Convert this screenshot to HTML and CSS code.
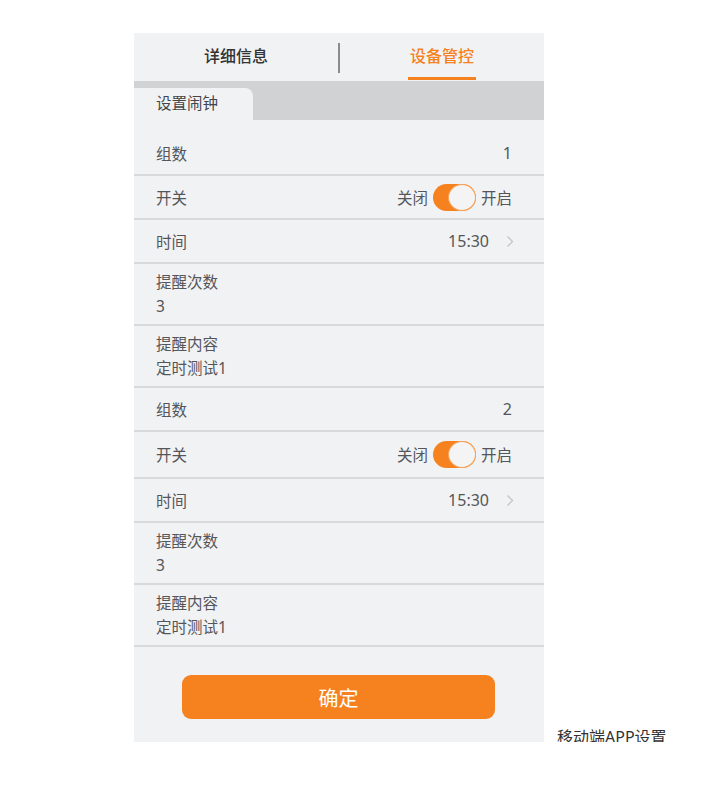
FILE: index.html
```html
<!DOCTYPE html>
<html lang="zh-CN">
<head>
<meta charset="utf-8">
<title>移动端APP设置</title>
<link rel="stylesheet" href="styles.css">
</head>
<body>
<div class="page">
  <div class="panel">
    <div class="tabs">
      <div class="tab">详细信息</div>
      <div class="tab-divider"></div>
      <div class="tab active"><span class="tab-label">设备管控</span></div>
    </div>
    <div class="subbar">
      <div class="subtab">设置闹钟</div>
    </div>
    <div class="list">
      <div class="row"><span class="label">组数</span><span class="value">1</span></div>
      <div class="row"><span class="label">开关</span>
        <span class="switch-wrap"><span>关闭</span><span class="switch"><span class="knob"></span></span><span>开启</span></span>
      </div>
      <div class="row"><span class="label">时间</span>
        <span class="value time">15:30<svg class="chev" width="8" height="13" viewBox="0 0 8 13"><path d="M1.5 1.5 L6.5 6.5 L1.5 11.5" fill="none" stroke="#c4c5c8" stroke-width="1.3"/></svg></span>
      </div>
      <div class="row tall"><span class="label">提醒次数</span><span class="sub">3</span></div>
      <div class="row tall"><span class="label">提醒内容</span><span class="sub">定时测试1</span></div>

      <div class="row"><span class="label">组数</span><span class="value">2</span></div>
      <div class="row switch-row"><span class="label">开关</span>
        <span class="switch-wrap"><span>关闭</span><span class="switch"><span class="knob"></span></span><span>开启</span></span>
      </div>
      <div class="row"><span class="label">时间</span>
        <span class="value time">15:30<svg class="chev" width="8" height="13" viewBox="0 0 8 13"><path d="M1.5 1.5 L6.5 6.5 L1.5 11.5" fill="none" stroke="#c4c5c8" stroke-width="1.3"/></svg></span>
      </div>
      <div class="row tall"><span class="label">提醒次数</span><span class="sub">3</span></div>
      <div class="row tall"><span class="label">提醒内容</span><span class="sub">定时测试1</span></div>
    </div>
    <div class="actions">
      <button class="confirm">确定</button>
    </div>
  </div>
  <div class="caption">移动端APP设置</div>
</div>
</body>
</html>
```
FILE: styles.css
```css
* { box-sizing: border-box; }
html, body { margin: 0; padding: 0; background: #ffffff; }
body {
  font-family: "Noto Sans", "Noto Sans CJK SC", "Liberation Sans", sans-serif;
  color: #555659;
}
.page {
  display: flex;
  align-items: flex-end;
  padding: 33px 0 0 134px;
  gap: 13px;
}
.panel {
  width: 410px;
  background: #f1f2f4;
  display: flex;
  flex-direction: column;
}
.tabs {
  height: 48px;
  display: flex;
  align-items: center;
}
.tab {
  flex: 1;
  text-align: center;
  font-size: 16px;
  color: #333333;
  font-weight: 500;
  height: 48px;
  line-height: 47px;
}
.tab.active { color: #f5821f; }
.tab-label {
  display: inline-block;
  height: 47px;
  padding: 0 2px;
  border-bottom: 3px solid #f5821f;
  line-height: 46px;
}
.tab-divider {
  width: 2px;
  height: 30px;
  background: #8a8b8d;
  margin-top: 1px;
}
.subbar {
  background: #d1d2d4;
  height: 39px;
  padding-top: 7px;
}
.subtab {
  width: 119px;
  height: 32px;
  background: #f1f2f4;
  border-top-right-radius: 8px;
  font-size: 15.5px;
  color: #444548;
  padding-left: 22px;
  line-height: 30px;
}
.list {
  padding-top: 12px;
}
.row {
  display: flex;
  align-items: center;
  justify-content: space-between;
  height: 44px;
  padding: 0 32px 0 22px;
  border-bottom: 2px solid #d8d9db;
  font-size: 15.5px;
  color: #55565a;
}
.row.switch-row { height: 47px; }
.row.tall {
  flex-direction: column;
  align-items: flex-start;
  justify-content: center;
  height: 62px;
  line-height: 24px;
}
.value { color: #55565a; font-size: 16px; }
.value.time {
  display: flex;
  align-items: center;
  gap: 17px;
  margin-right: -2px;
}
.chev { display: block; }
.switch-wrap {
  display: flex;
  align-items: center;
  gap: 5px;
}
.switch {
  width: 43px;
  height: 27px;
  border-radius: 14px;
  background: #f5821f;
  display: flex;
  justify-content: flex-end;
}
.knob {
  width: 28px;
  height: 27px;
  border-radius: 50%;
  background: #f4f4f5;
  border: 1px solid #f7a25a;
}
.actions {
  padding: 28px 0 23px 48px;
}
.confirm {
  display: block;
  width: 313px;
  height: 44px;
  border: none;
  border-radius: 9px;
  background: #f5821f;
  color: #ffffff;
  font-family: "Noto Sans", "Noto Sans CJK SC", sans-serif;
  font-size: 20px;
  padding: 0;
  cursor: pointer;
}
.caption {
  font-size: 16px;
  color: #333333;
  line-height: 20px;
  margin-bottom: -5px;
  white-space: nowrap;
}
```
